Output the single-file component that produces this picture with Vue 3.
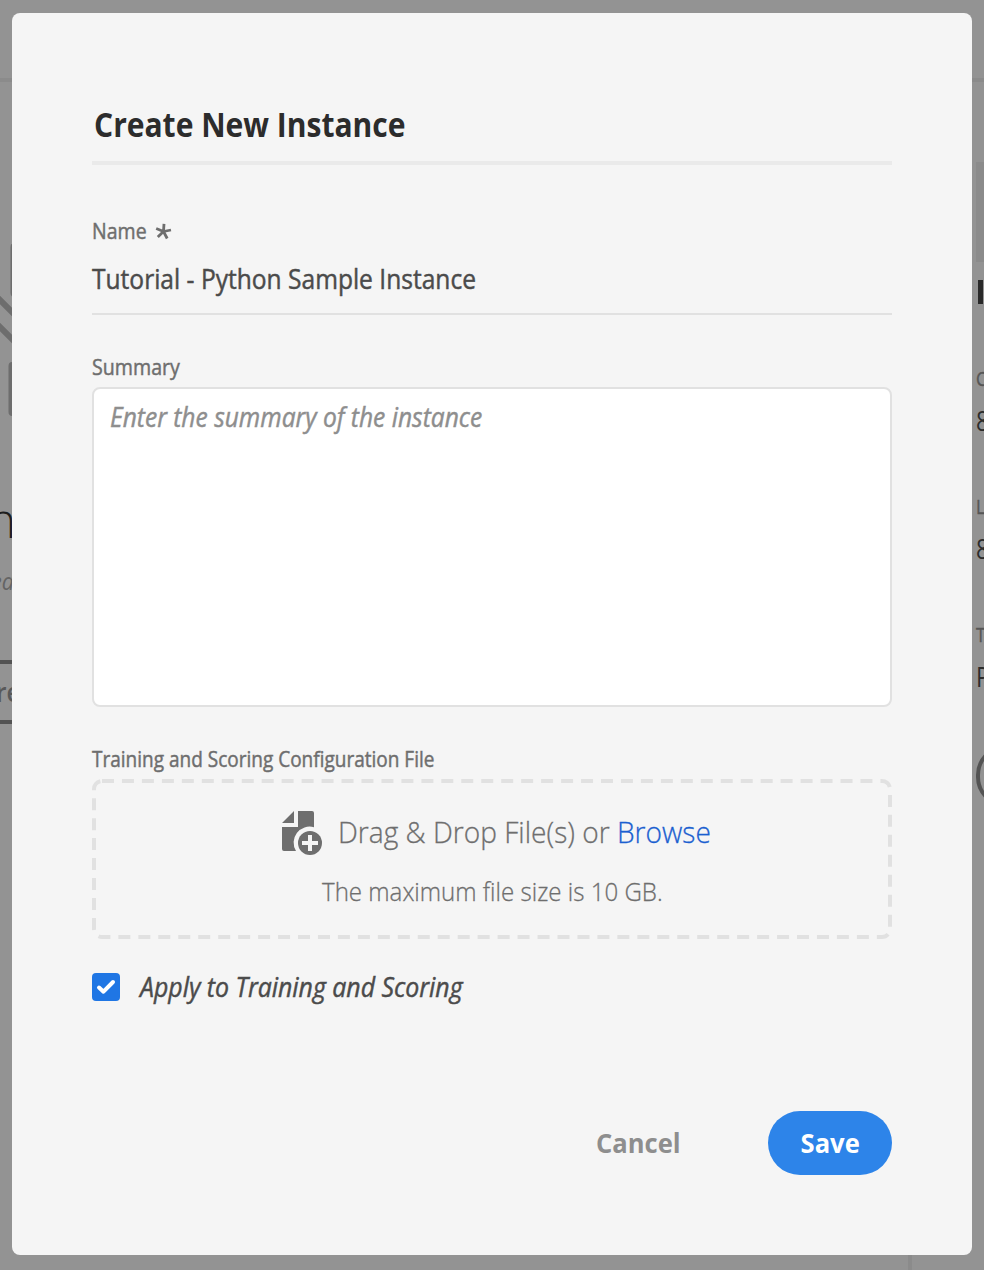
<script setup>
import { ref } from 'vue'

const name = ref('Tutorial - Python Sample Instance')
const applyBoth = ref(true)
</script>

<template>
  <div class="page">
    <div class="backdrop" aria-hidden="true">
      <div class="rule"></div>
      <svg class="art" width="12" height="190" viewBox="0 0 12 190">
        <rect x="10.500" y="2" width="20" height="54" rx="4" fill="#6d6d6d" />
        <path d="M-4 55L16 75M-4 82L16 102" stroke="#6d6d6d" stroke-width="6" />
        <rect x="8.500" y="121" width="20" height="54" rx="4" fill="#6d6d6d" />
      </svg>
      <span class="bg b-n">n</span>
      <span class="bg b-ea">ea</span>
      <div class="bg-button"><span class="bg b-re">re</span></div>
      <div class="tile"></div>
      <div class="bar"></div>
      <span class="bg right label r1">C</span>
      <span class="bg right value r2">8</span>
      <span class="bg right label r3">L</span>
      <span class="bg right value r4">8</span>
      <span class="bg right label r5">T</span>
      <span class="bg right value r6">P</span>
      <div class="round"></div>
      <div class="divider"></div>
    </div>

    <form class="dialog" @submit.prevent>
      <h1><span class="t t-title">Create New Instance</span></h1>

      <label class="caption name-caption">
        <span class="t t-name">Name</span>
        <svg width="17" height="17" viewBox="0 0 17 17">
          <path d="M8.500 8.500L9 .8M8.500 8.500L1.200 5.500M8.500 8.500L16 7M8.500 8.500L2.800 14M8.500 8.500L12.200 15.500" fill="none" stroke="#6e6e6e" stroke-width="2.800" />
        </svg>
      </label>
      <div class="input"><span class="t t-input">{{ name }}</span></div>

      <label class="caption summary-caption"><span class="t t-summary">Summary</span></label>
      <div class="textarea"><span class="t t-hint">Enter the summary of the instance</span></div>

      <label class="caption file-caption"><span class="t t-file">Training and Scoring Configuration File</span></label>
      <div class="drop">
        <svg class="dashes" width="800" height="160" viewBox="0 0 800 160">
          <rect x="2" y="2" width="796" height="156" rx="8" fill="none" stroke="#e1e1e1" stroke-width="4" stroke-dasharray="12 7.960" />
        </svg>
        <div class="drop-line">
          <svg width="40" height="44" viewBox="0 0 40 44">
            <path d="M12 0V12H0ZM16 0H30Q32 0 32 2V16.200A16 16 0 0 0 14 40H2Q0 40 0 38V16H16Z" fill="#6e6e6e" />
            <circle cx="28" cy="32" r="12" fill="#6e6e6e" />
            <path d="M28 24V40M20 32H36" stroke="#f5f5f5" stroke-width="4" />
          </svg>
          <span class="t t-drag">Drag &amp; Drop File(s) or <a>Browse</a></span>
        </div>
        <div class="limit"><span class="t t-limit">The maximum file size is 10 GB.</span></div>
      </div>

      <div class="check" role="checkbox" :aria-checked="applyBoth" @click="applyBoth = !applyBoth">
        <span class="box">
          <svg v-if="applyBoth" width="28" height="28" viewBox="0 0 28 28">
            <path d="M7 14.500L11.500 18.700L21 9" fill="none" stroke="#fff" stroke-width="4" stroke-linecap="round" stroke-linejoin="round" />
          </svg>
        </span>
        <span class="t t-apply">Apply to Training and Scoring</span>
      </div>

      <div class="actions">
        <button type="button" class="cancel"><span class="t t-cancel">Cancel</span></button>
        <button type="submit" class="save"><span class="t t-save">Save</span></button>
      </div>
    </form>
  </div>
</template>

<style>
body { margin: 0; }
</style>

<style scoped>
.page {
  position: relative;
  box-sizing: border-box;
  width: 984px;
  height: 1270px;
  padding: 13px 12px 15px;
  background: #939393;
  overflow: hidden;
  font-family: "Open Sans", "Noto Sans", sans-serif;
}
.backdrop { position: absolute; inset: 0; }
.rule { position: absolute; top: 78px; left: 0; right: 0; height: 4px; background: #8b8b8b; }
.art { position: absolute; left: 0; top: 241px; }
.bg { position: absolute; white-space: nowrap; line-height: 1; }
.b-n { right: 968px; top: 497px; font-size: 47px; font-weight: 300; color: #1e1e1e; }
.b-ea { left: -9px; top: 569px; font-size: 24px; font-style: italic; color: #646464; transform: scaleX(.9); transform-origin: left; }
.bg-button { position: absolute; left: -20px; top: 660px; width: 60px; height: 56px; border: 4px solid #535353; border-width: 4px 0; }
.b-re { left: 16px; top: 14px; font-size: 27px; font-weight: 600; color: #585858; transform: scaleX(.9); transform-origin: left; }
.tile { position: absolute; left: 976px; top: 162px; width: 8px; height: 100px; background: #8b8b8b; }
.bar { position: absolute; left: 978px; top: 280px; width: 5px; height: 24px; background: #292929; }
.right { left: 976px; transform: scaleX(.85); transform-origin: left; }
.label { font-size: 20px; color: #565656; -webkit-text-stroke: .4px currentColor; }
.value { font-size: 27px; color: #2c2c2c; }
.r1 { top: 369px; }
.r2 { top: 407px; }
.r3 { top: 497px; }
.r4 { top: 535px; }
.r5 { top: 625px; }
.r6 { top: 663px; }
.round { position: absolute; left: 976px; top: 745px; width: 52px; height: 54px; border: 4px solid #535353; border-radius: 31px; }
.divider { position: absolute; left: 908px; bottom: 0; width: 4px; height: 15px; background: #8b8b8b; }

.dialog {
  position: relative;
  box-sizing: border-box;
  height: 1242px;
  padding: 80px;
  border-radius: 8px;
  background: #f5f5f5;
}
.t { display: inline-block; white-space: nowrap; transform-origin: left center; }
.t-title { transform: scaleX(.896); }
.t-name { transform: scaleX(.93); }
.t-input { transform: scaleX(.927); }
.t-summary { transform: scaleX(.935); }
.t-hint { transform: scaleX(.927); }
.t-file { transform: scaleX(.905); }
.t-drag { transform: scaleX(.937); }
.t-limit { transform: scaleX(.909); }
.t-apply { transform: scaleX(.938); }
.t-name, .t-input, .t-summary, .t-hint, .t-file, .t-apply { -webkit-text-stroke: .45px currentColor; }
.t-drag, .t-limit { -webkit-text-stroke: .3px currentColor; }
h1 {
  box-sizing: border-box;
  height: 72px;
  margin: 0;
  padding-left: 2px;
  border-bottom: 4px solid #eaeaea;
  font-size: 33.500px;
  font-weight: 700;
  line-height: 63px;
  color: #2c2c2c;
}
.caption { display: flex; color: #6e6e6e; font-size: 21px; line-height: 26px; height: 28px; }
.name-caption { margin-top: 53px; }
.name-caption svg { margin: 5px 0 0 4px; }
.input {
  box-sizing: border-box;
  height: 69px;
  border-bottom: 2px solid #e1e1e1;
  font-size: 26.500px;
  line-height: 67px;
  color: #4b4b4b;
}
.summary-caption { margin-top: 39px; }
.textarea {
  box-sizing: border-box;
  height: 320px;
  margin-top: 5px;
  padding: 10px 16px;
  border: 2px solid #e1e1e1;
  border-radius: 8px;
  background: #fff;
  font-size: 26.500px;
  font-style: italic;
  line-height: 37px;
  color: #8e8e8e;
}
.file-caption { margin-top: 39px; }
.drop { position: relative; height: 160px; margin-top: 5px; color: #6e6e6e; }
.dashes { position: absolute; inset: 0; }
.drop-line { display: flex; padding: 32px 0 0 190px; height: 44px; gap: 16px; font-size: 30px; font-weight: 300; line-height: 42px; }
.drop-line a { color: #1b5fd0; }
.limit { padding-left: 230px; margin-top: 17px; font-size: 26.500px; font-weight: 300; line-height: 38px; }
.check { display: flex; align-items: center; gap: 20px; height: 38px; margin-top: 29px; font-size: 26.500px; font-style: italic; line-height: 38px; color: #4b4b4b; }
.box { width: 28px; height: 28px; border-radius: 4px; background: #1f76e4; }
.box svg { display: block; }
.actions { display: flex; justify-content: flex-end; margin-top: 105px; gap: 56px; }
button { height: 64px; padding: 0; border: 0; border-radius: 32px; background: none; font: 700 26.500px "Open Sans", sans-serif; }
.cancel { width: 148px; color: #8e8e8e; }
.save { width: 124px; background: #2d84e9; color: #fff; }
.t-cancel, .t-save { transform-origin: center; transform: translateX(.5px) scaleX(.965); }
</style>
